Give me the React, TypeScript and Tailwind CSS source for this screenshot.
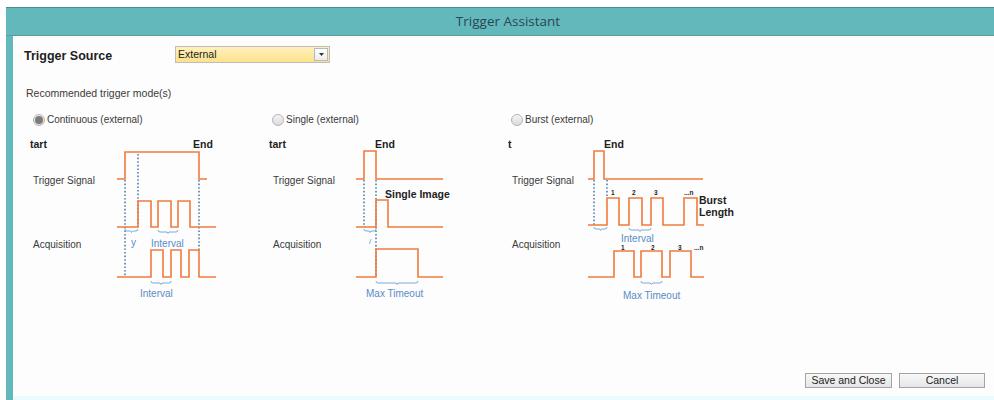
import React from "react"

const ORANGE = "#ef7b3c"
const DOT = "#2f62a0"
const BRACE = "#6f9fd3"

function Brace({ x1, x2, y }: { x1: number; x2: number; y: number }) {
  const m = (x1 + x2) / 2
  return (
    <path
      d={`M${x1} ${y} q0 2 2 2 H${m - 1} l1 1.5 l1 -1.5 H${x2 - 2} q2 0 2 -2`}
      fill="none"
      stroke={BRACE}
      strokeWidth={0.9}
    />
  )
}

function Dotted({ x, y1, y2 }: { x: number; y1: number; y2: number }) {
  return <line x1={x} y1={y1} x2={x} y2={y2} stroke={DOT} strokeWidth={1.3} strokeDasharray="1.6 2" />
}

function Wave({ d }: { d: string }) {
  return <path d={d} fill="none" stroke={ORANGE} strokeWidth={1.6} />
}

const sans = "'Liberation Sans', Arial, sans-serif"

function Labels({ x }: { x: number }) {
  return (
    <>
      <text x={x} y={184} fontSize={10} fill="#3a3a3a" fontFamily={sans}>
        Trigger Signal
      </text>
      <text x={x} y={248} fontSize={10} fill="#3a3a3a" fontFamily={sans}>
        Acquisition
      </text>
    </>
  )
}

function Bold({ x, y, children, size = 10.5 }: { x: number; y: number; children: React.ReactNode; size?: number }) {
  return (
    <text x={x} y={y} fontSize={size} fontWeight="bold" fill="#1e1e1e" fontFamily={sans}>
      {children}
    </text>
  )
}

function Blue({ x, y, children }: { x: number; y: number; children: React.ReactNode }) {
  return (
    <text x={x} y={y} fontSize={10} fill="#5a8cc6" fontFamily={sans}>
      {children}
    </text>
  )
}

function ContinuousDiagram() {
  return (
    <svg width={239} height={170} viewBox="30 135 239 170" className="block">
      <Bold x={30} y={148}>tart</Bold>
      <Bold x={193} y={148}>End</Bold>
      <Labels x={33} />
      <Dotted x={125} y1={180} y2={276} />
      <Dotted x={138} y1={154} y2={227} />
      <Dotted x={199} y1={180} y2={252} />
      <Wave d="M117 179 H125 V152 H199 V179 H207" />
      <Wave d="M117 227 H138 V201 H151 V227 H158 V201 H171 V227 H178 V201 H190 V227 H216" />
      <Wave d="M117 277 H151 V250 H163 V277 H171 V250 H181 V277 H189 V250 H199 V277 H216" />
      <Brace x1={125} x2={138} y={229} />
      <Blue x={131} y={246}>y</Blue>
      <Brace x1={158} x2={178} y={230} />
      <Blue x={151} y={247}>Interval</Blue>
      <Brace x1={151} x2={171} y={281} />
      <Blue x={140} y={297}>Interval</Blue>
    </svg>
  )
}

function SingleDiagram() {
  return (
    <svg width={239} height={170} viewBox="269 135 239 170" className="block">
      <Bold x={269} y={148}>tart</Bold>
      <Bold x={375} y={148}>End</Bold>
      <Labels x={273} />
      <Dotted x={364} y1={180} y2={227} />
      <Dotted x={376} y1={180} y2={276} />
      <Wave d="M356 179 H364 V151 H376 V179 H443" />
      <Bold x={385} y={198}>Single Image</Bold>
      <Wave d="M356 227 H376 V200 H388 V227 H443" />
      <Wave d="M356 277 H376 V249 H418 V277 H443" />
      <Brace x1={364} x2={376} y={229} />
      <text x={369} y={244} fontSize={8} fill="#5a8cc6" fontFamily={sans}>/</text>
      <Brace x1={376} x2={418} y={281} />
      <Blue x={366} y={297}>Max Timeout</Blue>
    </svg>
  )
}

function BurstDiagram() {
  return (
    <svg width={239} height={170} viewBox="508 135 239 170" className="block">
      <Bold x={508} y={148}>t</Bold>
      <Bold x={604} y={148}>End</Bold>
      <Labels x={512} />
      <Dotted x={594} y1={180} y2={225} />
      <Dotted x={607} y1={180} y2={197} />
      <Wave d="M588 179 H594 V151 H604 V179 H703" />
      <Wave d="M588 225 H607 V198 H619 V225 H629 V198 H642 V225 H651 V198 H663 V225 H684 V198 H697 V225 H704" />
      <Bold x={611} y={195} size={6.5}>1</Bold>
      <Bold x={632} y={195} size={6.5}>2</Bold>
      <Bold x={654} y={195} size={6.5}>3</Bold>
      <Bold x={684} y={195} size={6.5}>...n</Bold>
      <Bold x={699} y={204}>Burst</Bold>
      <Bold x={699} y={216}>Length</Bold>
      <Brace x1={594} x2={607} y={227} />
      <Brace x1={629} x2={651} y={228} />
      <Blue x={621} y={242}>Interval</Blue>
      <Wave d="M588 277 H614 V251 H634 V277 H641 V251 H662 V277 H670 V251 H691 V277 H704" />
      <Bold x={621} y={250} size={6.5}>1</Bold>
      <Bold x={651} y={250} size={6.5}>2</Bold>
      <Bold x={678} y={250} size={6.5}>3</Bold>
      <Bold x={694} y={250} size={6.5}>...n</Bold>
      <Brace x1={641} x2={662} y={281} />
      <Blue x={623} y={299}>Max Timeout</Blue>
    </svg>
  )
}

function Radio({ checked, label }: { checked?: boolean; label: string }) {
  return (
    <div className="flex items-center gap-[2px] pl-[3px] h-[12px]">
      <span className="flex h-[12px] w-[12px] items-center justify-center rounded-full border border-[#b4b4b4] bg-gradient-to-b from-[#f4f4f4] to-[#dcdcdc]">
        {checked && <span className="h-[8px] w-[8px] rounded-full bg-[#7c7c7c]" />}
      </span>
      <span className="text-[10px] text-[#3a3a3a] leading-none">{label}</span>
    </div>
  )
}

const modes = [
  { label: "Continuous (external)", checked: true, Diagram: ContinuousDiagram },
  { label: "Single (external)", checked: false, Diagram: SingleDiagram },
  { label: "Burst (external)", checked: false, Diagram: BurstDiagram },
]

export default function App() {
  return (
    <div className="flex h-[400px] w-[994px] flex-col overflow-hidden bg-white pt-[7px] font-['Liberation_Sans',Arial,sans-serif]">
      {/* title bar */}
      <div className="flex h-[29px] shrink-0 items-center justify-center border-t border-b border-t-[#4b8f93] border-b-[#5b9da0] bg-[#63b8bb] pl-[16px] ml-[6px]">
        <span className="font-['Open_Sans',sans-serif] text-[13.5px] text-[#2b4751]">Trigger Assistant</span>
      </div>

      <div className="ml-[6px] flex flex-1">
        <div className="w-[7px] bg-[#63b8bb]" />
        <div className="flex flex-1 flex-col">
          <div className="flex flex-1 flex-col bg-[#fdfdfd]">
            {/* trigger source row */}
            <div className="mt-[10px] flex h-[17px] items-center pl-[11px]">
              <span className="w-[151px] pt-[4px] text-[12.5px] font-bold text-[#222]">Trigger Source</span>
              <div className="flex h-[17px] w-[155px] items-center border border-[#bdbdbd] bg-gradient-to-b from-[#fff1bd] to-[#fde28a]">
                <span className="flex-1 pl-[2px] text-[10.5px] leading-none text-[#222]">External</span>
                <span className="mr-[1px] flex h-[13px] w-[14px] items-center justify-center border border-[#b8b8b8] bg-gradient-to-b from-[#ffffff] to-[#ececec]">
                  <svg width="5" height="3" viewBox="0 0 5 3">
                    <path d="M0 0 H5 L2.5 3 Z" fill="#333" />
                  </svg>
                </span>
              </div>
            </div>

            <div className="mt-[24px] pl-[13px] text-[10.5px] leading-[12px] text-[#3a3a3a]">Recommended trigger mode(s)</div>

            <div className="mt-[15px] flex pl-[17px]">
              {modes.map(({ label, checked, Diagram }) => (
                <div key={label} className="flex w-[239px] flex-col gap-[9px]">
                  <Radio label={label} checked={checked} />
                  <Diagram />
                </div>
              ))}
            </div>

            <div className="mt-auto flex justify-end gap-[7px] pb-[8px] pr-[9px]">
              <button className="h-[15px] w-[87px] border border-[#a4a4a4] bg-gradient-to-b from-[#f8f8f8] to-[#e6e6e6] text-[10.5px] leading-none text-[#222]">
                Save and Close
              </button>
              <button className="h-[15px] w-[86px] border border-[#a4a4a4] bg-gradient-to-b from-[#f8f8f8] to-[#e6e6e6] text-[10.5px] leading-none text-[#222]">
                Cancel
              </button>
            </div>
          </div>
          <div className="h-[4px] bg-[#e9fbfc]" />
        </div>
      </div>
    </div>
  )
}
